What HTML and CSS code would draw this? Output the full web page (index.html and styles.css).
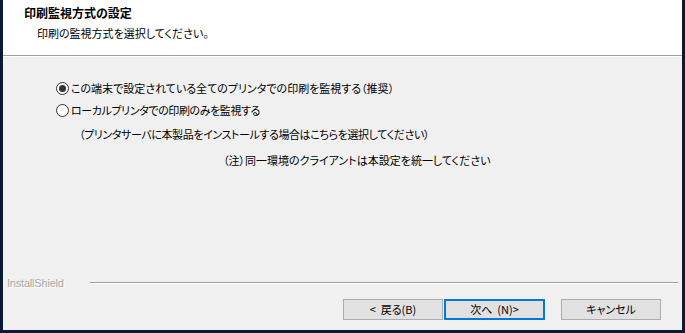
FILE: index.html
```html
<!DOCTYPE html>
<html>
	<head>
		<meta charset="utf-8">
		<title>印刷監視方式の設定</title>
		<link rel="stylesheet" href="styles.css">
	</head>
	<body>
		<div class="dlg">
			<div class="dlg_head">
				<p class="head_title">印刷監視方式の設定</p>
				<p class="head_sub">印刷の監視方式を選択してください。</p>
			</div>

			<div class="dlg_main">
				<div class="options">
					<label class="opt"><span class="radio checked"></span>この端末で設定されている全てのプリンタでの印刷を監視する（推奨）</label>
					<label class="opt opt_local"><span class="radio"></span>ローカルプリンタでの印刷のみを監視する</label>
					<p class="note">（プリンタサーバに本製品をインストールする場合はこちらを選択してください）</p>
					<p class="note2">（注）同一環境のクライアントは本設定を統一してください</p>
				</div>

				<div class="dlg_foot">
					<div class="brand">
						<span class="brand_name">InstallShield</span>
						<span class="brand_line"></span>
					</div>
					<div class="buttons">
						<button class="btn">&lt;&nbsp; 戻る(B)</button>
						<button class="btn btn_default">次へ&nbsp; (N)&gt;</button>
						<button class="btn btn_cancel">キャンセル</button>
					</div>
				</div>
			</div>
		</div>
	</body>
</html>
```

FILE: styles.css
```css
html, body {
	margin: 0;
	padding: 0;
}
body {
	width: 685px;
	height: 333px;
	overflow: hidden;
	background: #0b1836;
	font-family: "Noto Sans CJK JP", "Noto Sans", sans-serif;
	font-size: 11px;
	color: #000;
	font-feature-settings: "palt";
}
p {
	margin: 0;
}

.dlg {
	box-sizing: border-box;
	width: 685px;
	height: 333px;
	border-left: 3px solid #0b1836;
	border-right: 3px solid #0b1836;
	border-bottom: 3px solid #0b1836;
	display: flex;
	flex-direction: column;
	background: #f0f0f0;
}

.dlg_head {
	height: 56px;
	box-sizing: border-box;
	padding: 5px 0 0 21px;
	background: #fff;
	border-bottom: 1px solid #a0a0a0;
}
.head_title {
	font-weight: bold;
	font-size: 12px;
	line-height: 16px;
}
.head_sub {
	margin: 4px 0 0 13px;
	line-height: 16px;
}

.dlg_main {
	flex: 1;
	display: flex;
	flex-direction: column;
	border-top: 1px solid #fff;
}

.options {
	padding: 20px 0 0 53px;
}
.opt {
	display: flex;
	align-items: center;
	height: 22px;
}
.opt_local {
	letter-spacing: -0.4px;
}
.radio {
	box-sizing: border-box;
	width: 13px;
	height: 13px;
	margin-right: 2px;
	border: 1px solid #333;
	border-radius: 50%;
	background: #fff;
	display: flex;
	align-items: center;
	justify-content: center;
}
.radio.checked::after {
	content: "";
	width: 7px;
	height: 7px;
	border-radius: 50%;
	background: #333;
}
.note {
	line-height: 22px;
	margin-top: 2px;
	padding-left: 23px;
	letter-spacing: -0.4px;
}
.note2 {
	line-height: 22px;
	margin-top: 4px;
	padding-left: 167px;
}

.dlg_foot {
	margin-top: auto;
	padding-bottom: 10px;
}
.brand {
	display: flex;
	align-items: center;
	padding-left: 4px;
	padding-right: 4px;
	height: 14px;
}
.brand_name {
	font-family: "Liberation Sans", sans-serif;
	font-size: 11px;
	letter-spacing: -0.2px;
	color: #a7a7a7;
	text-shadow: 1px 1px 0 #fff;
}
.brand_line {
	flex: 1;
	margin-left: 26px;
	height: 1px;
	background: #a0a0a0;
	border-bottom: 1px solid #fff;
}

.buttons {
	display: flex;
	justify-content: flex-end;
	padding-right: 21px;
	margin-top: 9px;
}
.btn {
	box-sizing: border-box;
	width: 100px;
	height: 21px;
	margin-left: 1px;
	padding: 0;
	background: #e1e1e1;
	border: 1px solid #adadad;
	font-family: "Noto Sans CJK JP", "Noto Sans", sans-serif;
	font-size: 11px;
	font-feature-settings: "palt";
	color: #000;
	line-height: 17px;
}
.btn_default {
	border: 2px solid #0078d7;
	width: 101px;
}
.btn_cancel {
	margin-left: 16px;
}
```
